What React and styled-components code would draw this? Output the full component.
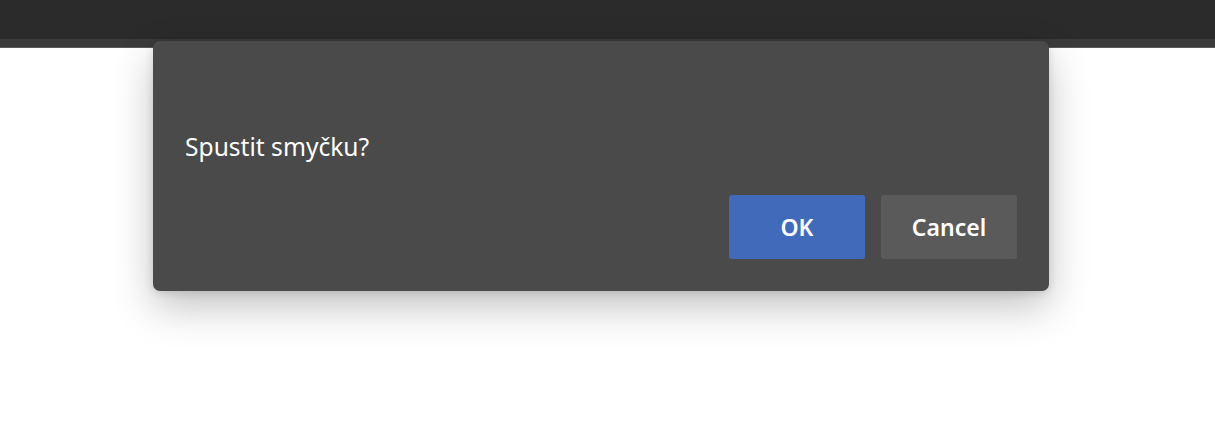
import React from 'react'
import styled, { createGlobalStyle } from 'styled-components'

const GlobalStyle = createGlobalStyle`
  html, body {
    margin: 0;
    padding: 0;
    background: #ffffff;
    font-family: "Noto Sans", "Open Sans", "Liberation Sans", sans-serif;
  }
`

const Page = styled.div`
  position: relative;
  width: 1215px;
  height: 424px;
  overflow: hidden;
  background: #ffffff;
`

const TitleBar = styled.div`
  height: 39px;
  background: #2b2b2b;
`

const TabStrip = styled.div`
  height: 8px;
  background: #3b3b3b;
  border-bottom: 1px solid #5a5a5a;
`

const Dialog = styled.div`
  position: absolute;
  top: 41px;
  left: 153px;
  width: 896px;
  height: 250px;
  box-sizing: border-box;
  padding: 90px 32px 32px;
  display: flex;
  flex-direction: column;
  background: #4a4a4a;
  border-radius: 7px;
  box-shadow: 0 16px 40px rgba(0, 0, 0, 0.24), 0 2px 8px rgba(0, 0, 0, 0.12);
`

const Message = styled.div`
  font-size: 24.6px;
  line-height: 32px;
  color: #ffffff;
`

const Actions = styled.div`
  margin-top: auto;
  display: flex;
  justify-content: flex-end;
  gap: 16px;
`

const Button = styled.button`
  width: 136px;
  height: 64px;
  padding: 0;
  border: none;
  border-radius: 3px;
  font-family: inherit;
  font-size: 23px;
  font-weight: 600;
  color: #ffffff;
  background: ${({ $primary }) => ($primary ? '#416bba' : '#5a5a5a')};
  cursor: pointer;
`

export default function App() {
  return (
    <Page>
      <GlobalStyle />
      <TitleBar />
      <TabStrip />
      <Dialog role="dialog">
        <Message>Spustit smyčku?</Message>
        <Actions>
          <Button $primary>OK</Button>
          <Button>Cancel</Button>
        </Actions>
      </Dialog>
    </Page>
  )
}
